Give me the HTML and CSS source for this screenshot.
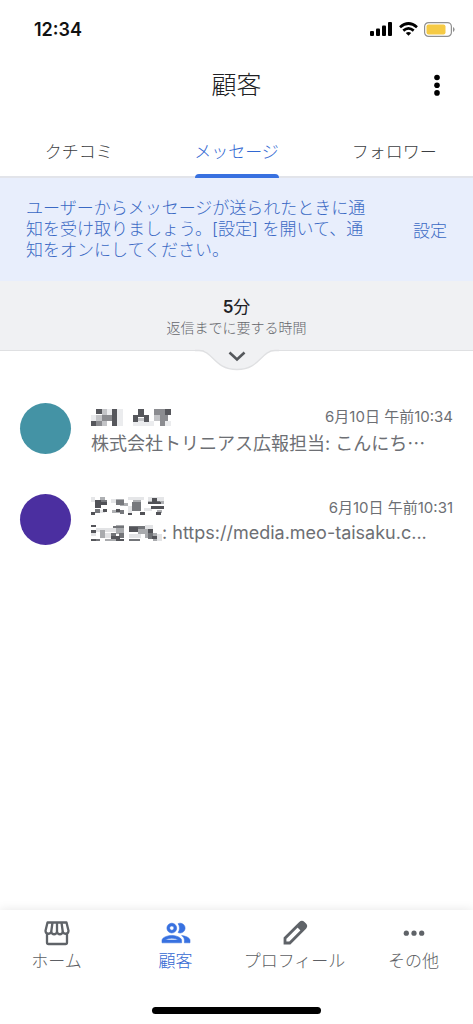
FILE: index.html
```
<!DOCTYPE html>
<html lang="ja">
<head>
<meta charset="utf-8">
<meta name="viewport" content="width=device-width, initial-scale=1">
<title>顧客</title>
<link rel="stylesheet" href="styles.css">
</head>
<body>
<div class="status">
  <time class="clock">12:34</time>
  <div class="status-icons">
    <svg width="23" height="14" viewBox="0 0 23 14" aria-hidden="true"><rect x="0" y="9" width="4" height="5" rx="1"/><rect x="6" y="6.500" width="4" height="7.500" rx="1"/><rect x="12" y="3.500" width="4" height="10.500" rx="1"/><rect x="18" y="0" width="4" height="14" rx="1"/></svg>
    <svg width="19" height="14" viewBox="0 0 19 14" aria-hidden="true"><g fill="none" stroke="#000" stroke-width="2.700"><path d="M1 5.200Q9.500-2.200 18 5.200"/><path d="M4.300 8.600Q9.500 4.200 14.700 8.600"/></g><path d="M6.800 11q2.700-2 5.400 0L9.500 13.800z"/></svg>
    <svg width="31" height="15" viewBox="0 0 31 15" aria-hidden="true"><rect x=".6" y=".6" width="26.800" height="13.800" rx="4" fill="#fff" stroke="#909090" stroke-width="1.200"/><rect x="2.500" y="2.500" width="19" height="10" rx="2" fill="#f5ca45"/><path d="M29 5q1.600.8 1.600 2.500T29 10z" fill="#909090"/></svg>
  </div>
</div>
<header class="header">
  <h1 class="title">顧客</h1>
  <button class="menu" type="button" aria-label="メニュー"><svg width="8" height="22" viewBox="0 0 8 22"><circle cx="4" cy="3.500" r="2.800"/><circle cx="4" cy="11.200" r="2.800"/><circle cx="4" cy="18.900" r="2.800"/></svg></button>
</header>
<nav class="tabs">
  <a class="tab" href="#reviews">クチコミ</a>
  <a class="tab tab-active" href="#messages" aria-current="page">メッセージ</a>
  <a class="tab" href="#followers">フォロワー</a>
</nav>
<main class="main">
  <section class="banner">
    <p class="banner-text">ユーザーからメッセージが送られたときに通<wbr>知を受け取りましょう。[設定] を開いて、通<wbr>知をオンにしてください。</p>
    <a class="banner-link" href="#settings">設定</a>
  </section>
  <section class="reply">
    <p class="reply-value"><b>5</b>分</p>
    <p class="reply-label">返信までに要する時間</p>
    <button class="expand" type="button" aria-label="詳細を開く">
      <svg width="84" height="24" viewBox="0 0 84 24"><path d="M0 0H84V1H80C66 1 65 20.500 42 20.500S18 1 4 1H0z" fill="#f0f1f3"/><path d="M0 1.500H4C18 1.500 19 20.500 42 20.500S66 1.500 80 1.500H84" fill="none" stroke="#dfe0e2" stroke-width="1.300"/><path d="M34.500 3.500l7.500 7 7.500-7" fill="none" stroke="#55585c" stroke-width="2.600"/></svg>
    </button>
  </section>
  <ul class="list">
    <li><a class="item" href="#message-1">
      <span class="avatar avatar-teal"></span>
      <span class="item-body">
        <span class="item-top">
          <svg class="mosaic" width="82" height="22" viewBox="0 -4 82 22" shape-rendering="crispEdges" aria-label="非表示の名前">
            <g fill="#ebecee"><path d="M0 6h5v6H0zM16 0h5v6h-5zM26 0h6v17h-6zM42 12h17v5H42zM58 12h5v5h-5zM74 12h6v5h-6z"/></g>
            <g fill="#c3c4c7"><path d="M5 6h6v11H5zM11 0h5v6h-5zM11 12h5v5h-5zM63 0h6v6h-6zM63 6h6v6h-6zM47 9h6v3h-6z"/></g>
            <g fill="#8b8c90"><path d="M11 6h10v6H11zM5 12h6v5H5zM69 0h5v12h-5zM63 0h6v6h-6zM74 6h3v6h-3zM69 12h5v5h-5z"/></g>
            <g fill="#56575c"><path d="M5 0h6v5H5zM0 12h5v5H0zM21 0h5v17h-5zM47 0h6v6h-6zM42 6h5v7h-5zM53 6h5v7h-5zM47 5h6v3h-6zM74 0h6v6h-6z"/></g>
          </svg>
          <time class="date">6月10日 午前10:34</time>
        </span>
        <span class="preview">株式会社トリニアス広報担当: こんにち<span class="dots">⋯</span></span>
      </span>
    </a></li>
    <li><a class="item" href="#message-2">
      <span class="avatar avatar-purple"></span>
      <span class="item-body">
        <span class="item-top">
          <svg class="mosaic" width="76" height="19" viewBox="0 0 76 19" shape-rendering="crispEdges" aria-label="非表示の名前">
            <g fill="#e5e6e8"><path d="M0 0h4v5H0zM20 2h6v4h-6zM37 0h16v3H37zM57 0h16v4H57zM37 9h4v8h-4zM8 13h6v3H8zM53 11h8v3h-8z"/></g>
            <g fill="#aeb0b3"><path d="M9 0h5v3H9zM25 2h8v4h-8zM29 6h8v3h-8zM21 13h8v3h-8zM42 3h8v3h-8zM57 4h16v3H57zM66 13h5v3h-5z"/></g>
            <g fill="#77797d"><path d="M8 3h8v5H8zM25 3h8v5h-8zM41 5h9v9h-9zM29 13h4v4h-4zM4 12h5v4H4zM61 4h8v3h-8z"/></g>
            <g fill="#515257"><path d="M4 3h6v8H4zM9 5h7v3H9zM0 15h4v3H0zM12 12h4v3h-4zM25 12h4v3h-4zM37 16h4v2h-4zM49 15h5v3h-5zM61 1h5v5h-5zM57 5h13v2H57zM60 9h13v3H60zM65 15h5v3h-5z"/></g>
          </svg>
          <time class="date">6月10日 午前10:31</time>
        </span>
        <span class="preview"><svg class="mosaic-inline" width="71" height="16" viewBox="0 0 71 16" shape-rendering="crispEdges" aria-label="非表示の名前">
            <g fill="#e2e3e5"><path d="M5 3h20v4H5zM14 8h6v5h-6zM38 9h12v4H38zM54 0h8v4h-8zM0 8h5v3H0zM66 9h5v7h-5z"/></g>
            <g fill="#a9abae"><path d="M9 5h5v8H9zM25 0h8v4h-8zM25 4h8v5h-8zM47 3h7v6h-7zM54 4h4v9h-4zM62 8h4v8h-4zM14 14h12v2H14z"/></g>
            <g fill="#737579"><path d="M20 8h5v4h-5zM28 8h5v5h-5zM38 1h16v3H38zM38 14h11v2H38zM57 8h5v6h-5zM5 14h4v2H5zM22 1h11v2H22z"/></g>
            <g fill="#54555a"><path d="M0 0h5v2H0zM0 5h5v3H0zM0 14h5v2H0zM20 11h9v3h-9zM38 2h9v5h-9zM57 4h5v4h-5zM61 11h5v3h-5zM25 14h8v2h-8z"/></g>
          </svg>: https://media.meo-taisaku.c...</span>
      </span>
    </a></li>
  </ul>
</main>
<footer class="footer">
  <nav class="bottom-nav">
    <a class="nav-item" href="#home">
      <svg width="28" height="28" viewBox="0 0 28 28" fill="none" stroke="#5f6368" stroke-width="2.300"><path d="M4 14v9.500Q4 25 5.500 25h17q1.500 0 1.500-1.500V14"/><path d="M4.500 3.500h19l2 8.200a3 3 0 0 1-5.700 1.300 3 3 0 0 1-5.800 0 3 3 0 0 1-5.800 0 3 3 0 0 1-5.700-1.300z" stroke-linejoin="round"/><path d="M9.500 3.500l-1.300 9.500M14 3.500V13M18.500 3.500l1.300 9.500"/></svg>
      <span>ホーム</span>
    </a>
    <a class="nav-item nav-active" href="#customers" aria-current="page">
      <svg width="34" height="28" viewBox="2 2 20 20" fill="#3871e0" stroke="#3871e0" stroke-width=".4"><path d="M9 13.750c-2.340 0-7 1.170-7 3.500V19h14v-1.750c0-2.330-4.660-3.500-7-3.500zM4.340 17c.84-.58 2.870-1.250 4.660-1.250s3.820.67 4.660 1.250zM9 12c1.930 0 3.500-1.570 3.500-3.500S10.930 5 9 5 5.500 6.570 5.500 8.500 7.070 12 9 12zm0-5c.83 0 1.500.67 1.500 1.500S9.830 10 9 10s-1.500-.67-1.500-1.500S8.170 7 9 7zm7.040 6.810c1.160.84 1.960 1.960 1.960 3.440V19h4v-1.750c0-2.020-3.500-3.170-5.960-3.440zM15 12c1.930 0 3.500-1.570 3.500-3.500S16.930 5 15 5c-.54 0-1.040.13-1.500.35.63.89 1 1.980 1 3.150s-.37 2.260-1 3.150c.46.22.96.35 1.500.35z"/></svg>
      <span>顧客</span>
    </a>
    <a class="nav-item" href="#profile">
      <svg width="28" height="28" viewBox="-2 -2 28 28"><path d="M2 22V17.200L17.200 2q1.700-1.500 3.300 0l1.500 1.500q1.500 1.600 0 3.300L6.800 22z" fill="none" stroke="#5f6368" stroke-width="2.800"/><path d="M14 6l4.500-4.500h2l2.500 2.500-.5 1.500-4.500 4.500z" fill="#5f6368"/></svg>
      <span>プロフィール</span>
    </a>
    <a class="nav-item" href="#more">
      <svg width="28" height="28" viewBox="0 0 28 28" fill="#5f6368"><circle cx="6.300" cy="14.200" r="2.600"/><circle cx="14" cy="14.200" r="2.600"/><circle cx="21.700" cy="14.200" r="2.600"/></svg>
      <span>その他</span>
    </a>
  </nav>
  <div class="home-bar"></div>
</footer>
</body>
</html>
```
FILE: styles.css
```
* { box-sizing: border-box; }
body {
  margin: 0;
  min-height: 100vh;
  display: flex;
  flex-direction: column;
  background: #fff;
  color: #202124;
  font-family: Inter, "Noto Sans CJK JP", sans-serif;
  font-weight: 400;
}
a { color: inherit; text-decoration: none; }
p, h1, ul { margin: 0; padding: 0; }
ul { list-style: none; }
button { border: 0; padding: 0; background: none; cursor: pointer; }
svg { display: block; flex: none; }
.status {
  display: flex;
  justify-content: space-between;
  align-items: center;
  height: 46px;
  padding: 12px 18px 0 34px;
}
.clock { font-size: 18px; font-weight: 600; color: #111; }
.status-icons { display: flex; align-items: center; gap: 6px; }
.header {
  display: grid;
  grid-template-columns: 1fr auto 1fr;
  align-items: center;
  height: 78px;
  padding: 0 32px;
}
.title { grid-column: 2; font-size: 25px; font-weight: 300; line-height: 32px; }
.menu { justify-self: end; }
.tabs {
  display: flex;
  height: 54px;
  border-bottom: 2px solid #e2e4ea;
  font-weight: 300;
}
.tab {
  flex: 1;
  display: flex;
  justify-content: center;
  align-items: center;
  position: relative;
  font-size: 17px;
  color: #3c3e42;
}
.tab-active { color: #3268d2; }
.tab-active::after {
  content: "";
  position: absolute;
  bottom: -2px;
  width: 84px;
  height: 4px;
  border-radius: 4px 4px 0 0;
  background: #3871e0;
}
.main { flex: 1; }
.banner {
  display: flex;
  justify-content: space-between;
  align-items: center;
  gap: 40px;
  min-height: 103px;
  padding: 0 26px;
  background: #e8eefc;
  color: #3a69c4;
  font-size: 17px;
  font-weight: 300;
}
.banner-text { line-height: 21px; word-break: keep-all; }
.banner-link { flex: none; }
.reply {
  position: relative;
  height: 70px;
  padding-top: 14px;
  text-align: center;
  background: #f0f1f3;
  border-bottom: 1px solid #dfe0e2;
}
.reply-value { font-size: 17px; line-height: 24px; }
.reply-value b { font-weight: 600; }
.reply-label { font-size: 14px; line-height: 18px; font-weight: 300; color: #65676c; }
.expand { position: absolute; top: 68px; left: 50%; transform: translateX(-50%); }
.list { padding: 32px 20px 0; }
.item { display: flex; align-items: center; gap: 20px; height: 91px; }
.avatar { flex: none; width: 51px; height: 51px; border-radius: 50%; }
.avatar-teal { background: #4493a5; }
.avatar-purple { background: #4b2fa0; }
.item-body { flex: 1; min-width: 0; }
.item-top { display: flex; justify-content: space-between; align-items: center; height: 26px; }
.date { font-size: 15px; color: #6d6f74; }
.preview {
  display: flex;
  align-items: center;
  height: 26px;
  white-space: nowrap;
  font-size: 18px;
  color: #6d6f74;
}
.footer { background: #fff; box-shadow: 0 0 10px rgba(0, 0, 0, .1); padding-bottom: 10px; }
.bottom-nav { display: flex; height: 97px; margin-left: -3px; padding-top: 9px; }
.nav-item {
  flex: 1 1 0;
  min-width: 0;
  display: flex;
  flex-direction: column;
  align-items: center;
  font-size: 17px;
  font-weight: 300;
  line-height: 28px;
  white-space: nowrap;
  color: #5d5f64;
}
.nav-active { color: #3268d2; }
.home-bar { width: 169px; height: 7px; margin: 0 auto; border-radius: 4px; background: #000; }
```
